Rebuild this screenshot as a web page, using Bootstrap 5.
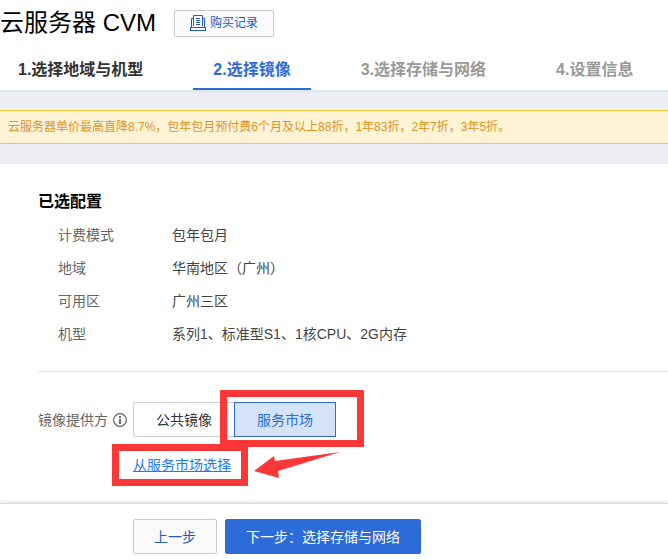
<!DOCTYPE html>
<html lang="zh-CN">
<head>
<meta charset="utf-8">
<meta name="viewport" content="width=device-width, initial-scale=1">
<title>云服务器 CVM</title>
<link href="https://cdn.jsdelivr.net/npm/bootstrap@5.3.0/dist/css/bootstrap.min.css" rel="stylesheet">
<style>
  body { font: 14px/20px "Liberation Sans", "Noto Sans CJK SC", sans-serif; color: #444; background: #fff; }
  .page-title { font-size: 24px; line-height: 32px; font-weight: 400; color: #000; }
  .btn { --bs-btn-font-size: 14px; --bs-btn-line-height: 20px; --bs-btn-border-radius: 2px; white-space: nowrap; }
  .page-head { height: 46px; gap: 18px; }
  .btn-plain { --bs-btn-color: #2159c9; --bs-btn-bg: #fafafa; --bs-btn-border-color: #c9cbd0; --bs-btn-hover-color: #2159c9; --bs-btn-hover-bg: #f0f2f5; --bs-btn-hover-border-color: #c9cbd0; }
  .btn-record { --bs-btn-font-size: 12px; --bs-btn-padding-x: 15px; --bs-btn-padding-y: 0; height: 27px; gap: 4px; }
  .steps { gap: 30px; height: 44px; }
  .steps .nav-link { height: 44px; padding: 14px 20px 8px; font-size: 16px; line-height: 20px; font-weight: 700; color: #999; white-space: nowrap; border-bottom: 2px solid transparent; }
  .steps .nav-item:first-child .nav-link { padding-left: 18px; }
  .steps .nav-link.done { color: #333; }
  .steps .nav-link.active { color: #2d6cd8; border-bottom-color: #2d6cd8; }
  .notice-band { background: #edeff4 linear-gradient(#dfe5ec, #edeff4) top / 100% 4px no-repeat; padding: 20px 0; }
  .notice { --bs-alert-bg: #fff3d6; --bs-alert-color: #dd931f; padding: 6px 8px; border: solid #fcc436; border-width: 1px 0; font-size: 12px; line-height: 20px; min-height: 34px; }
  .panel-body { padding: 27px 0 12px 38px; }
  .section-title { font-size: 16px; line-height: 22px; font-weight: 700; color: #000; margin-bottom: 6px; }
  .config { grid-template-columns: 114px 1fr; row-gap: 13px; padding: 6px 0 27px 20px; border-bottom: 1px solid #e2e4ea; }
  .config dt { font-weight: 400; color: #666; }
  .field { padding-top: 30px; }
  .field-label { width: 95px; color: #666; gap: 5px; }
  .choice { height: 35px; width: 102px; --bs-btn-padding-x: 0; --bs-btn-padding-y: 6px; --bs-btn-color: #333; --bs-btn-bg: #fff; --bs-btn-border-color: #cdced9; --bs-btn-active-color: #2d6cd8; --bs-btn-active-bg: #d5e3f8; --bs-btn-active-border-color: #2d6cd8; }
  .market-link { color: #2478f5; }
  .link-row { padding: 18px 0 0 95px; }
  /* highlight frames and arrow drawn over the form */
  .frame { position: absolute; border: 7px solid #fb3737; pointer-events: none; }
  .frame-choice { inset: -12px -28px -10px 87px; }
  .frame-link { inset: -11px -17px -11px -21px; }
  .arrow { position: absolute; left: 121px; top: -4px; pointer-events: none; }
  .foot { padding: 15px 0 5px 133px; gap: 8px; border-top: 1px solid #d5dae3; box-shadow: 0 -1px 4px #dce0e8; }
  .foot .btn { height: 35px; --bs-btn-padding-x: 20px; --bs-btn-padding-y: 5px; }
  .btn-next { --bs-btn-bg: #2d6cd8; --bs-btn-border-color: #2d6cd8; --bs-btn-hover-bg: #245dbe; --bs-btn-hover-border-color: #245dbe; }
</style>
<script src="https://cdn.jsdelivr.net/npm/bootstrap@5.3.0/dist/js/bootstrap.bundle.min.js"></script>
</head>
<body class="d-flex flex-column min-vh-100">
<header>
  <div class="page-head d-flex align-items-center">
    <h1 class="page-title m-0">云服务器 CVM</h1>
    <button type="button" class="btn btn-plain btn-record d-inline-flex align-items-center">
      <svg width="16" height="16" viewBox="0 0 16 16" fill="none" stroke="#2159c9" aria-hidden="true"><path d="M3.500 11V.5h9V11M3.500 3.500h-2v9M12.500 3.500h2v9M0 12.500h16M0 15.500h16M.5 12v4M15.500 12v4M6 3.500h4M6 5.500h4M6 7.500h4M6 9.500h4"/></svg>
      购买记录
    </button>
  </div>
  <nav aria-label="购买步骤">
    <ul class="nav steps flex-nowrap">
      <li class="nav-item"><a class="nav-link done" href="#">1.选择地域与机型</a></li>
      <li class="nav-item"><a class="nav-link active" href="#" aria-current="step">2.选择镜像</a></li>
      <li class="nav-item"><a class="nav-link" href="#">3.选择存储与网络</a></li>
      <li class="nav-item"><a class="nav-link" href="#">4.设置信息</a></li>
    </ul>
  </nav>
</header>
<div class="notice-band">
  <div class="alert notice rounded-0 m-0" role="alert">云服务器单价最高直降8.7%，包年包月预付费6个月及以上88折，1年83折，2年7折，3年5折。</div>
</div>
<main class="panel-body flex-grow-1">
  <h2 class="section-title">已选配置</h2>
  <dl class="config d-grid m-0">
    <dt>计费模式</dt><dd class="m-0">包年包月</dd>
    <dt>地域</dt><dd class="m-0">华南地区（广州）</dd>
    <dt>可用区</dt><dd class="m-0">广州三区</dd>
    <dt>机型</dt><dd class="m-0">系列1、标准型S1、1核CPU、2G内存</dd>
  </dl>
  <div class="field d-flex align-items-center">
    <div class="field-label d-flex align-items-center" id="provider-label">镜像提供方
      <svg width="14" height="14" viewBox="0 0 14 14" fill="none" stroke="#666" aria-hidden="true"><circle cx="7" cy="7" r="6.400" stroke-width="1.200"/><path d="M7 3v2M7 6v5" stroke-width="2"/></svg>
    </div>
    <div class="btn-group position-relative" role="group" aria-labelledby="provider-label">
      <button type="button" class="btn choice">公共镜像</button>
      <button type="button" class="btn choice active" aria-pressed="true">服务市场</button>
      <span class="frame frame-choice"></span>
    </div>
  </div>
  <div class="link-row">
    <span class="position-relative d-inline-block"><a class="market-link" href="#">从服务市场选择</a>
      <span class="frame frame-link"></span>
      <svg class="arrow" width="88" height="28" viewBox="0 0 88 28" fill="#fb3737" aria-hidden="true"><path d="M86 1 21 10 20 5 0 20 25 27 24 20Z"/></svg>
    </span>
  </div>
</main>
<footer class="foot d-flex">
  <button type="button" class="btn btn-plain">上一步</button>
  <button type="button" class="btn btn-primary btn-next">下一步：选择存储与网络</button>
</footer>
</body>
</html>
